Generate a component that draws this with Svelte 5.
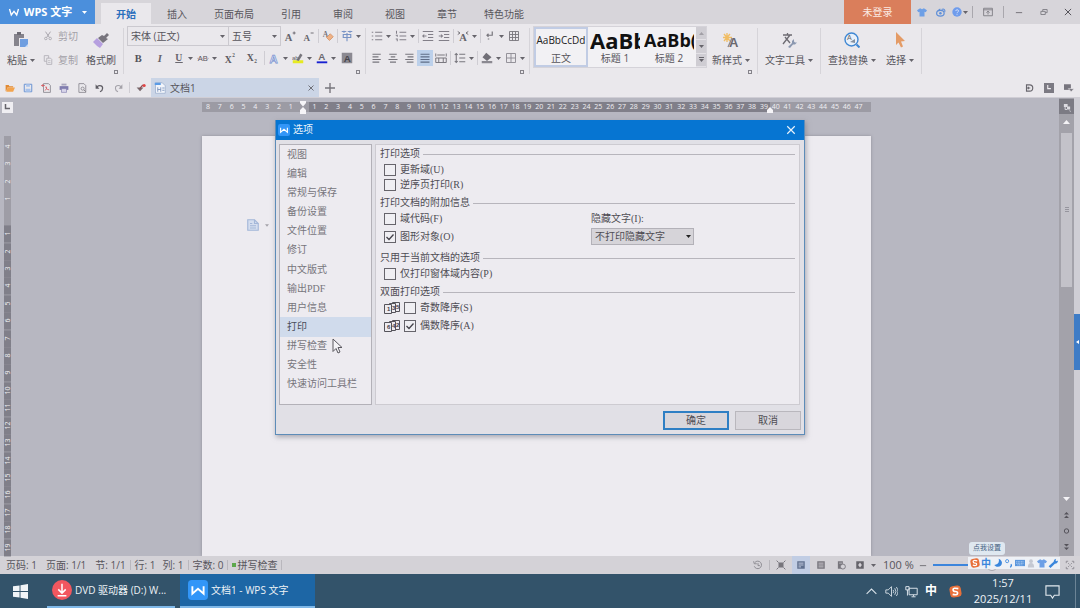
<script>
  const icons = {
    wps: '<path d="M2 4l2.4 8L8 7.2l3.6 4.8L14 4" fill="none" stroke="#fff" stroke-width="1.8"/>',
    paste: '<path d="M1 2h10v4H6v8H1z" fill="#85838c"/><rect x="4" y="0" width="4" height="3" fill="#6d6b74"/><path d="M7 7h8v8H7z" fill="#6f9ee0"/><path d="M12 15l3-3v3z" fill="#c8dcf8"/>',
    cut: '<path d="M4 1l6 9M12 1L6 10" stroke="#a9a7ae" stroke-width="1.6" fill="none"/><circle cx="4.500" cy="12" r="2" fill="none" stroke="#a9a7ae" stroke-width="1.400"/><circle cx="11.500" cy="12" r="2" fill="none" stroke="#a9a7ae" stroke-width="1.400"/>',
    copy: '<path d="M2 1h7v9H2z" fill="none" stroke="#b2b0b7" stroke-width="1.400"/><path d="M6 5h6l2 2v8H6z" fill="#eae8ec" stroke="#b2b0b7" stroke-width="1.400"/><path d="M8 9h4M8 12h4" stroke="#b2b0b7"/>',
    brush: '<path d="M11 4l3-3 2 2-3 3 2 1-5 4-5-5 4-3z" fill="#77747d"/><path d="M4 6l6 6-3 4-3-2-4-4z" fill="#b69fdf"/>',
    aup: '<text x="1" y="14" font-family="Liberation Serif" font-size="14" font-weight="bold" fill="#66646b">A</text><path d="M11.500 4h4M13.500 2v4" stroke="#66646b" stroke-width="1.200"/>',
    adown: '<text x="2" y="14" font-family="Liberation Serif" font-size="12" font-weight="bold" fill="#66646b">A</text><path d="M11.500 4h4" stroke="#66646b" stroke-width="1.200"/>',
    clear: '<text x="1" y="9" font-family="Liberation Serif" font-size="10" font-weight="bold" fill="#74727a">A</text><path d="M11 5l4 4-5 5-4-4z" fill="#efb185" stroke="#cf8f62"/>',
    pinyin: '<path d="M1 2h6M4 1v3M9 2h6M12 1v3" stroke="#7893c4" stroke-width="1.300"/><path d="M3 6h10v4H3zM8 4v11" fill="none" stroke="#7893c4" stroke-width="1.500"/>',
    bold: '<text x="3.500" y="13" font-family="Liberation Serif" font-size="14" font-weight="bold" fill="#55535a">B</text>',
    italic: '<text x="5" y="13" font-family="Liberation Serif" font-size="14" font-style="italic" font-weight="bold" fill="#66646b">I</text>',
    underline: '<text x="3" y="11.500" font-family="Liberation Serif" font-size="13" font-weight="bold" fill="#66646b">U</text><path d="M3 14h10" stroke="#66646b" stroke-width="1.300"/>',
    strike: '<text x="1" y="12" font-family="Liberation Sans" font-size="10" fill="#55535a">AB</text><path d="M0 8.500h16" stroke="#b59aa0" stroke-width=".8"/>',
    sup: '<text x="1" y="14" font-family="Liberation Serif" font-size="13" font-weight="bold" fill="#5c5a61">X</text><text x="11" y="6" font-family="Liberation Serif" font-size="7" font-weight="bold" fill="#5c5a61">2</text>',
    sub: '<text x="1" y="12" font-family="Liberation Serif" font-size="13" font-weight="bold" fill="#5c5a61">X</text><text x="11" y="15" font-family="Liberation Serif" font-size="7" font-weight="bold" fill="#5c5a61">2</text>',
    effect: '<text x="2" y="14" font-family="Liberation Sans" font-size="15" font-weight="bold" fill="#e8ecf8" stroke="#7690cf">A</text>',
    mark: '<path d="M1 11h14v4H1z" fill="#e6ea22"/><path d="M6 11l5-9 3 2-5 8z" fill="#77757c"/><text x="0" y="10" font-family="Liberation Sans" font-size="8" fill="#66646b">ab</text>',
    color: '<text x="3" y="11" font-family="Liberation Sans" font-size="13" font-weight="bold" fill="#6a686f">A</text><path d="M1 12.500h14v2.500H1z" fill="#1720d0"/>',
    shade: '<path d="M1 1h14v14H1z" fill="#8b8991"/><text x="3.500" y="13" font-family="Liberation Sans" font-size="13" font-weight="bold" fill="#46444b">A</text>',
    bullets: '<path d="M1 3h2M1 8h2M1 13h2M5.500 3H15M5.500 8H15M5.500 13H15" stroke="#827f88" stroke-width="1.500"/>',
    numbers: '<path d="M2 1v4M1 7h2v2M1 12h2v3M6 3h9M6 8h9M6 13h9" fill="none" stroke="#827f88" stroke-width="1.400"/>',
    outdent: '<path d="M1 2h14M8 6h7M8 10h7M1 14h14M6 8H1M3 6L1 8l2 2" fill="none" stroke="#827f88" stroke-width="1.400"/>',
    indent: '<path d="M1 2h14M8 6h7M8 10h7M1 14h14M1 8h5M4 6l2 2-2 2" fill="none" stroke="#827f88" stroke-width="1.400"/>',
    scale: '<text x="3" y="14" font-family="Liberation Serif" font-size="14" font-weight="bold" fill="#66646b">A</text><path d="M1 2l3 2-3 2M15 2l-3 2 3 2" fill="none" stroke="#66646b" stroke-width="1.200"/>',
    marks: '<path d="M11 2v5H4M6 5L4 7l2 2M5 12h2" fill="none" stroke="#77757c" stroke-width="1.600"/>',
    grid: '<path d="M2 2h12v12H2zM2 6h12M2 10h12M6 2v12M10 2v12" fill="none" stroke="#77757c" stroke-width="1.200"/>',
    left: '<path d="M2 3h11M2 6.500h8M2 10h11M2 13.500h9" stroke="#77757c" stroke-width="1.400"/>',
    center: '<path d="M3 3h10M5 6.500h6M2 10h12M4 13.500h8" stroke="#77757c" stroke-width="1.400"/>',
    right: '<path d="M3 3h11M6 6.500h8M3 10h11M5 13.500h9" stroke="#77757c" stroke-width="1.400"/>',
    justify: '<path d="M2 3h12M2 6.500h12M2 10h12M2 13.500h12" stroke="#5f6d87" stroke-width="1.600"/>',
    spread: '<path d="M1 2v4M15 2v4M3 4h10M1 8h14v6H1zM5 8v6M11 8v6" fill="none" stroke="#77757c" stroke-width="1.300"/>',
    spacing: '<path d="M3 2v12M1 4l2-2 2 2M1 12l2 2 2-2M7 3h8M7 8h8M7 13h8" fill="none" stroke="#77757c" stroke-width="1.400"/>',
    fill: '<path d="M7 1l7 6-6 5-6-5z" fill="#706e76"/><path d="M1 12h14v3H1z" fill="#8b8991"/>',
    border: '<path d="M2 2h12v12H2zM2 8h12M8 2v12" fill="none" stroke="#8b8991" stroke-width="1.200"/>',
    newstyle: '<path d="M4 1v9M0 5.500h9M1 2l6 7M7 2L1 9" stroke="#f1bd63" stroke-width="1.300"/><path d="M5 15l4-9" stroke="#8b8991" stroke-width="1.300"/><text x="6" y="15" font-family="Liberation Sans" font-size="13" font-weight="bold" fill="#6a686f">A</text>',
    tools: '<path d="M2 3h9M6.500 1v2M9 3L2 12M4 5l5 6" fill="none" stroke="#6d6b72" stroke-width="1.300"/><path d="M7 15l4-4v-2l2-2v2.500l1 1H16l-2 2h-2l-3 3.500z" fill="#8b98b0"/>',
    find: '<circle cx="7.500" cy="7.500" r="6.500" fill="#e8f0fa" stroke="#3f87d3" stroke-width="1.400"/><path d="M12.500 12.500l3 3" stroke="#3f87d3" stroke-width="2"/><text x="3" y="8" font-family="Liberation Sans" font-size="7" fill="#666">A</text><path d="M6 10l5-3v4z" fill="#85909f"/>',
    pointer: '<path d="M4 0l9 9-4 .5 2 5-2 1-2.500-5L4 13z" fill="#e49b66"/>',
    open: '<path d="M1 3h5l1 2h6v2H4l-2 6H1z" fill="#e18a34"/><path d="M4 7h12l-3 7H2z" fill="#f3a44e"/>',
    save: '<path d="M2 2h12v12H2z" fill="none" stroke="#6a93d2" stroke-width="1.600"/><path d="M5 2h6v4H5zM4 9h8v5H4z" fill="#a9c3ec"/>',
    pdf: '<path d="M4 1h8l3 3v11H4z" fill="none" stroke="#8b8991" stroke-width="1.400"/><path d="M6 12c4-2 3-6 2-6s1 5 5 5M1 4h5M3 2L1 4l2 2" fill="none" stroke="#d7575b" stroke-width="1.400"/>',
    print: '<path d="M4 1h8v3H4z" fill="#a9a6bd"/><path d="M1 5h14v6H1z" fill="#7f7cae"/><path d="M4 9h8v6H4z" fill="#d8d5ea" stroke="#7f7cae"/>',
    preview: '<path d="M3 1h8l3 3v11H3z" fill="none" stroke="#85838a" stroke-width="1.300"/><circle cx="9" cy="9" r="2.500" fill="none" stroke="#85838a" stroke-width="1.300"/><path d="M11 11l3 3" stroke="#85838a" stroke-width="1.500"/>',
    undo: '<path d="M3 6c5-4 10-1 9 3 0 2-2 4-4 5" fill="none" stroke="#5f5d64" stroke-width="2"/><path d="M1 2v7h6z" fill="#5f5d64"/>',
    redo: '<path d="M13 6C8 2 3 5 4 9c0 2 2 4 4 5" fill="none" stroke="#a4a2a9" stroke-width="1.800"/><path d="M15 2v7H9z" fill="#a4a2a9"/>',
    check: '<path d="M1 7h11l-5.500 6z" fill="#77686c"/><path d="M6 9l5-6" stroke="#8d4a4e" stroke-width="2"/><circle cx="13" cy="4" r="2.500" fill="#e04545"/>',
    doc: '<path d="M2 1h9l4 4v10H2z" fill="#f2f5fb" stroke="#9aaccb"/><path d="M1 1h8v3H1z" fill="#5b9be5"/><path d="M5 7v6M9 7v6M5 10h4M11 8h3M11 11h3" stroke="#7c94bb" stroke-width="1.200"/>',
    shirt: '<path d="M5 2l3 1.500L11 2l5 3-2 3.500-2-1V15H4V7.500l-2 1L0 5z" fill="#6d9fe6"/>',
    weibo: '<ellipse cx="7" cy="10" rx="6" ry="4.500" fill="none" stroke="#5f8fd8" stroke-width="2"/><circle cx="7" cy="10" r="2" fill="#5f8fd8"/><path d="M9 4c4-2 6 1 5 4M3 6l4-3" fill="none" stroke="#5f8fd8" stroke-width="1.700"/>',
    help: '<circle cx="8" cy="8" r="7.500" fill="#6f9cec"/><path d="M6 6.500c0-3 4.500-3 4.500 0C10.500 8 8 8 8 10M8 11.500v1.500" fill="none" stroke="#dfe8fb" stroke-width="1.300"/>',
    collapse: '<path d="M1 2h14v12H1zM1 4.500h14M8 12V7M5.500 9L8 6.500 10.500 9" fill="none" stroke="#7c7a81" stroke-width="1.400"/>',
    minimize: '<path d="M3 9h10" stroke="#6a686f" stroke-width="1.400"/>',
    restore: '<path d="M3 7h7v5H3zM6 7V4h7v5h-3" fill="none" stroke="#7c7a81" stroke-width="1.400"/>',
    close: '<path d="M3 3l10 10M13 3L3 13" stroke="currentColor" stroke-width="1.600"/>',
    plus: '<path d="M8 0v16M0 8h16" stroke="#77757c" stroke-width="2.200"/>',
    dmark: '<path d="M4 3h5a4 4 0 0 1 0 10H4zM7 6v4M4 8h6" fill="none" stroke="#68666d" stroke-width="1.800"/>',
    lmark: '<path d="M0 0h16v16H0z" fill="#7c7a83"/><path d="M6 3v6h5" fill="none" stroke="#f2f0f4" stroke-width="1.700"/>',
    panel: '<path d="M0 2h11v9H0z" fill="#77757e"/><path d="M7 9h9l-4.500 5z" fill="#77757e" stroke="#eae8ec"/>',
    history: '<path d="M3 4a6 6 0 1 1-1 6M1 2l1 4h4M8 5v4h3" fill="none" stroke="#85838a" stroke-width="1.400"/>',
    full: '<path d="M4 4h8v8H4z" fill="#77757c"/><path d="M1 1l3 3M15 1l-3 3M1 15l3-3M15 15l-3-3" stroke="#77757c" stroke-width="1.600"/>',
    pageview: '<path d="M2 2h12v12H2z" fill="#5f6f8e"/><path d="M4 5h8M4 8h8M4 11h4" stroke="#dbe3f4" stroke-width="1.200"/>',
    outline: '<path d="M2 2h12v12H2z" fill="#77757c"/><path d="M4 5h8M4 8h8M4 11h8" stroke="#d4d2d7" stroke-width="1.300"/>',
    web: '<path d="M3 2h8v12H3z" fill="#77757c"/><circle cx="11" cy="10.500" r="4" fill="#d4d2d7" stroke="#77757c" stroke-width="1.400"/><path d="M5 5h5" stroke="#d4d2d7"/>',
    read: '<path d="M2 2h12v12H2z" fill="#66646b"/><path d="M8 4l3 4-3 4-3-4z" fill="#d4d2d7"/>',
    corner: '<path d="M2 5V2h3M11 2h3v3M14 11v3h-3M5 14H2v-3M5 5l2 2M11 5L9 7M5 11l2-2M11 11L9 9" fill="none" stroke="#85838a" stroke-width="1.300"/>',
    windows: '<path d="M0 2.500l7-1v6H0zM8 1.300L16 0v7.500H8zM0 8.500h7v6l-7-1zM8 8.500h8V16l-8-1.300z" fill="#f1f4f7"/>',
    download: '<circle cx="8" cy="8" r="8" fill="#f2575f"/><path d="M8 3v7M5 7.500l3 3 3-3M4.500 12.500h7" fill="none" stroke="#fff" stroke-width="1.200"/>',
    wpsapp: '<rect width="16" height="16" rx="3" fill="#3296f8"/><path d="M3.500 5v6L8 7l4.500 4V5" fill="none" stroke="#fff" stroke-width="1.500"/>',
    chevron: '<path d="M2 11l6-6 6 6" fill="none" stroke="#dbe3ea" stroke-width="1.300"/>',
    sound: '<path d="M1 6h3l4-4v12l-4-4H1zM10 6q1.500 2 0 4M12 4q3 4 0 8M14 2.500q4 5.500 0 11" fill="none" stroke="#dbe3ea" stroke-width="1.100"/>',
    network: '<path d="M5 4h10v8H5zM8 14.500h5M10.500 12v2M1 2h4v4H1zM3 6v7" fill="none" stroke="#dbe3ea" stroke-width="1.200"/>',
    sogou: '<rect x="1" y="1" width="14" height="14" rx="4" fill="#e8703a" transform="rotate(-10 8 8)"/><path d="M11.500 4.500Q5 3 5 5.500T8 8t2.500 2.500-6 1" fill="none" stroke="#fff" stroke-width="2"/>',
    notice: '<path d="M1 2h14v10H10l-2 3-2-3H1z" fill="none" stroke="#e4eaef" stroke-width="1.200"/>',
    moon: '<path d="M9 1c2 7-2 9-7 10 5 6 14 2 12-5-1-3-3-4-5-5z" fill="#3a86dc"/>',
    punct: '<circle cx="5" cy="5" r="2.500" fill="none" stroke="#3a86dc" stroke-width="1.300"/><path d="M11 10q2 2-1 5" fill="none" stroke="#3a86dc" stroke-width="2"/>',
    keyboard: '<path d="M0 3h16v10H0z" fill="#5b97dd"/><path d="M2 6h12M2 8.500h12M4 11h8" stroke="#e3eefb" stroke-dasharray="1.500 1"/>',
    person: '<circle cx="8" cy="5" r="3" fill="#c4c8d2"/><path d="M3 15q0-7 5-7t5 7z" fill="#c4c8d2"/>',
    wrench: '<path d="M1 13L9 6q0-4 4-5L12 4l2 1 2-1q0 5-5 5l-7 7z" fill="#3a86dc"/>',
    note: '<path d="M1 1h9l5 5v9H1z" fill="#d5deef" stroke="#a4b7d8" stroke-width="1.500"/><path d="M10 1v5h5M4 6h3M4 9h8M4 12h8" fill="none" stroke="#a4b7d8" stroke-width="1.500"/>',
    select: '<path d="M3 3h6v5H3zM8 7h5v5H8z" fill="#dcdbe1"/><path d="M5 5v7h3M12 14l2 1" fill="none" stroke="#dcdbe1" stroke-width="1.500"/>'
  };

  const menus = ['开始', '插入', '页面布局', '引用', '审阅', '视图', '章节', '特色功能'];
  const quick = [
    ['open', '打开'], ['save', '保存'], ['pdf', '输出PDF'], ['print', '打印'],
    ['preview', '打印预览'], ['undo', '撤销'], ['redo', '恢复']
  ];
  // Each tool: [icon, label, has drop-down, extra class]; null draws a divider.
  const fontTop = [['aup', '增大字号', 0, 'mid'], ['adown', '减小字号', 0, 'mid'], null, ['clear', '清除格式'], null, ['pinyin', '拼音指南', 1]];
  const fontBottom = [
    ['bold', '加粗', 0, 'wide'], ['italic', '倾斜', 0, 'wide'], ['underline', '下划线', 1], ['strike', '删除线', 1],
    ['sup', '上标', 0, 'wide'], ['sub', '下标', 0, 'wide'], null, ['effect', '文字效果', 1], ['mark', '突出显示', 1],
    ['color', '字体颜色', 1], ['shade', '字符底纹', 0, 'mid']
  ];
  const paraTop = [
    ['bullets', '项目符号', 1], ['numbers', '编号', 1], null, ['outdent', '减少缩进'], ['indent', '增加缩进'], null,
    ['scale', '中文版式', 1], null, ['marks', '显示标记', 1], ['grid', '表格']
  ];
  const paraBottom = [
    ['left', '左对齐'], ['center', '居中'], ['right', '右对齐'], ['justify', '两端对齐', 0, 'on'], ['spread', '分散对齐'],
    null, ['spacing', '行距', 1], null, ['fill', '底纹颜色', 1], ['border', '边框', 1]
  ];

  const hRuler = Array.from({ length: 56 }, (_, i) => Math.abs(i - 8) || '');
  const vRuler = Array.from({ length: 24 }, (_, i) => Math.abs(i - 4) || '');

  const pages = ['视图', '编辑', '常规与保存', '备份设置', '文件位置', '修订', '中文版式', '输出PDF', '用户信息', '打印', '拼写检查', '安全性', '快速访问工具栏'];
  let page = $state('打印');
  let opts = $state({ update: false, reverse: false, codes: false, shapes: true, form: false, odd: false, even: true });
  let zoom = $state(50);
</script>

{#snippet icon(name, cls = '')}
  <svg class="icon {cls}" viewBox="0 0 16 16" aria-hidden="true">{@html icons[name]}</svg>
{/snippet}

{#snippet caret()}
  <svg class="caret" viewBox="0 0 5 3" aria-hidden="true"><path d="M0 0h5L2.500 3z" fill="currentColor" /></svg>
{/snippet}

{#snippet tools(list)}
  {#each list as t}
    {#if t}
      <button class="tool {t[3] ?? ''}" class:split={t[2]} aria-label={t[1]}>
        <span class="pic">{@render icon(t[0], 'sm')}</span>{#if t[2]}{@render caret()}{/if}
      </button>
    {:else}
      <i class="rule"></i>
    {/if}
  {/each}
{/snippet}

{#snippet box(key, label)}
  <label class="opt"><input type="checkbox" bind:checked={opts[key]} /><span>{label}</span></label>
{/snippet}

{#snippet sheets(digits)}
  <svg class="sheets" viewBox="0 0 17 12" aria-hidden="true">
    <g fill="#edebf0" stroke="#55535a"><path d="M8.500 .5h7v9h-7z" /><path d="M5.500 1.500h6v9h-6z" /><path d="M.5 2.500h7v9h-7z" /></g>
    <g font-family="Liberation Sans" font-size="6" font-weight="bold" fill="#44424a">
      <text x="3" y="9">{digits[0]}</text><text x="8" y="8">{digits[1]}</text><text x="12" y="7">{digits[2]}</text>
    </g>
  </svg>
{/snippet}

<div class="app">
  <header class="title">
    <button class="brand">{@render icon('wps', 'sm')}<b>WPS 文字</b>{@render caret()}</button>
    <nav>
      {#each menus as m, i}<button class="menu" class:active={i === 0}>{m}</button>{/each}
    </nav>
    <button class="login">未登录</button>
    <div class="wintools">
      <button aria-label="皮肤">{@render icon('shirt', 'xs')}</button>
      <button aria-label="微博">{@render icon('weibo', 'xs')}</button>
      <button aria-label="帮助">{@render icon('help', 'xs')}{@render caret()}</button>
      <i class="rule"></i>
      <button class="roomy" aria-label="隐藏功能区">{@render icon('collapse', 'xs')}</button>
      <i class="rule"></i>
      <button class="roomy" aria-label="最小化">{@render icon('minimize', 'xs')}</button>
      <button class="roomy" aria-label="还原">{@render icon('restore', 'xs')}</button>
      <button class="roomy" aria-label="关闭">{@render icon('close', 'xs')}</button>
    </div>
  </header>

  <section class="ribbon">
    <div class="group clip">
      <button class="big">{@render icon('paste')}<span>粘贴{@render caret()}</span></button>
      <div class="stack">
        <button class="dim">{@render icon('cut', 'xs')}剪切</button>
        <button class="dim">{@render icon('copy', 'xs')}复制</button>
      </div>
      <button class="big">{@render icon('brush')}<span>格式刷</span></button>
      <button class="launch" aria-label="剪贴板设置"></button>
    </div>
    <div class="group rows">
      <div class="row">
        <button class="combo font"><span>宋体 (正文)</span>{@render caret()}</button>
        <button class="combo size"><span>五号</span>{@render caret()}</button>
        {@render tools(fontTop)}
      </div>
      <div class="row">{@render tools(fontBottom)}</div>
      <button class="launch" aria-label="字体设置"></button>
    </div>
    <div class="group rows">
      <div class="row">{@render tools(paraTop)}</div>
      <div class="row">{@render tools(paraBottom)}</div>
      <button class="launch" aria-label="段落设置"></button>
    </div>
    <div class="group styles">
      <div class="gallery">
        <button class="style chosen"><span class="sample">AaBbCcDd</span><span>正文</span></button>
        <button class="style"><span class="sample h1">AaBb</span><span>标题 1</span></button>
        <button class="style"><span class="sample h2">AaBb(</span><span>标题 2</span></button>
        <div class="steps">
          <button aria-label="上一行" class="off">{@render caret()}</button>
          <button aria-label="下一行">{@render caret()}</button>
          <button aria-label="更多样式" class="more">{@render caret()}</button>
        </div>
      </div>
      <button class="big">{@render icon('newstyle')}<span>新样式{@render caret()}</span></button>
      <button class="launch" aria-label="样式设置"></button>
    </div>
    <div class="group wordtools"><button class="big">{@render icon('tools')}<span>文字工具{@render caret()}</span></button></div>
    <div class="group last">
      <button class="big">{@render icon('find')}<span>查找替换{@render caret()}</span></button>
      <button class="big">{@render icon('pointer')}<span>选择{@render caret()}</span></button>
    </div>
  </section>

  <section class="tabs">
    {#each quick as q}<button class="quick" aria-label={q[1]}>{@render icon(q[0], 'xs')}</button>{/each}
    <i class="rule"></i>
    <button class="quick" aria-label="更多">{@render icon('check', 'xs')}</button>
    <div class="doc">{@render icon('doc', 'sm')}<span>文档1</span><button aria-label="关闭文档">{@render icon('close', 'xx')}</button></div>
    <button class="quick add" aria-label="新建">{@render icon('plus', 'xs')}</button>
    <div class="end">
      <button aria-label="文档切换">{@render icon('dmark', 'xs')}</button>
      <button aria-label="标尺">{@render icon('lmark', 'xs')}</button>
      <button aria-label="任务窗格">{@render icon('panel', 'xs')}</button>
    </div>
  </section>

  <main>
    <aside class="vside">
      <span class="tabstop"><svg viewBox="0 0 11 11"><path d="M3.500 2v4.500H8" fill="none" stroke="#66646b" stroke-width="1.500" /></svg></span>
      <div class="vruler">
        {#each vRuler as n, i}<span class:dark={i > 4}>{n}</span>{/each}
      </div>
    </aside>
    <div class="canvas">
      <div class="hruler">
        {#each hRuler as n, i}
          <span class:dark={i > 8 && i < 48}>{n}{#if i === 8}<svg class="mark" viewBox="0 0 6 13"><path d="M0 0h6v2L3 5.500 0 2zM0 9l3-3 3 3v4H0z" fill="#f6f5f8" /></svg>{/if}{#if i === 47}<svg class="mark" viewBox="0 0 6 13"><path d="M0 9l3-3 3 3v3H0z" fill="#f6f5f8" /></svg>{/if}</span>
        {/each}
      </div>
      <article class="paper"><button class="pasteopt" aria-label="粘贴选项">{@render icon('note', 'sm')}{@render caret()}</button></article>
    </div>
    <div class="scroll">
      <button class="pick" aria-label="选择对象">{@render icon('select', 'xs')}</button>
      <button class="arrow" aria-label="向上滚动"><svg viewBox="0 0 7 4"><path d="M0 4l3.500-4L7 4z" fill="#f4f3f6" /></svg></button>
      <div class="track"><div class="thumb"><i></i><i></i><i></i></div></div>
      <button class="arrow" aria-label="向下滚动"><svg viewBox="0 0 7 4"><path d="M0 0h7L3.500 4z" fill="#f4f3f6" /></svg></button>
      <button class="arrow" aria-label="上一页"><svg viewBox="0 0 5 6"><path d="M0 2.500L2.500 0 5 2.500zM0 6l2.500-2.500L5 6z" fill="#55535a" /></svg></button>
      <button class="arrow" aria-label="浏览对象"><svg viewBox="0 0 6 6"><circle cx="3" cy="3" r="2.200" fill="none" stroke="#55535a" /></svg></button>
      <button class="arrow" aria-label="下一页"><svg viewBox="0 0 5 6"><path d="M0 0h5L2.500 2.500zM0 3.500h5L2.500 6z" fill="#55535a" /></svg></button>
    </div>
    <div class="edge"><button aria-label="展开任务窗格"><svg viewBox="0 0 3 4"><path d="M3 0v4L0 2z" fill="#fff" /></svg></button></div>
  </main>

  <footer class="status">
    <span class="s1">页码: 1</span><span class="s1">页面: 1/1</span><span>节: 1/1</span><i class="rule"></i>
    <span class="s2">行: 1</span><span>列: 1</span><i class="rule"></i>
    <span>字数: 0</span><i class="rule"></i>
    <span class="spell"><i></i>拼写检查</span><i class="rule"></i>
    <div class="views">
      <button aria-label="历史版本">{@render icon('history', 'xs')}</button><i class="rule"></i>
      <button aria-label="全屏显示">{@render icon('full', 'xs')}</button>
      <button class="on" aria-label="页面视图">{@render icon('pageview', 'xs')}</button>
      <button aria-label="大纲视图">{@render icon('outline', 'xs')}</button>
      <button aria-label="Web 版式">{@render icon('web', 'xs')}</button>
      <button class="readview" aria-label="阅读版式">{@render icon('read', 'xs')}{@render caret()}</button>
      <span class="pct">100 %</span>
      <button class="minus" aria-label="缩小">{@render icon('minimize', 'xs')}</button>
      <input type="range" min="0" max="100" bind:value={zoom} aria-label="显示比例" />
      <button class="fit" aria-label="调整窗口">{@render icon('corner', 'xs')}</button>
    </div>
  </footer>

  <footer class="taskbar">
    <button class="start" aria-label="开始菜单">{@render icon('windows')}</button>
    <button class="task dvd">{@render icon('download', 'lg')}<span>DVD 驱动器 (D:) W...</span></button>
    <button class="task current">{@render icon('wpsapp', 'lg')}<span>文档1 - WPS 文字</span></button>
    <div class="tray">
      <button aria-label="显示隐藏的图标">{@render icon('chevron', 'sm')}</button>
      <button aria-label="音量">{@render icon('sound')}</button>
      <button aria-label="网络">{@render icon('network')}</button>
      <button class="ime">中</button>
      <button class="so" aria-label="搜狗输入法">{@render icon('sogou', 'sm')}</button>
      <time><span>1:57</span><span>2025/12/11</span></time>
      <button class="bell" aria-label="通知">{@render icon('notice')}</button>
      <i class="rule"></i>
    </div>
  </footer>

  <div class="dialog" role="dialog" aria-label="选项">
    <div class="dtitle">{@render icon('wpsapp', 'sm')}<span>选项</span><button aria-label="关闭">{@render icon('close', 'sm')}</button></div>
    <div class="dbody">
      <ul>
        {#each pages as p}<li><button class:sel={page === p} onclick={() => (page = p)}>{p}</button></li>{/each}
      </ul>
      <div class="pane">
        <section><h3>打印选项</h3>{@render box('update', '更新域(U)')}{@render box('reverse', '逆序页打印(R)')}</section>
        <section>
          <h3>打印文档的附加信息</h3>
          <div class="two">
            <div class="loose">{@render box('codes', '域代码(F)')}{@render box('shapes', '图形对象(O)')}</div>
            <div class="hidden-text">
              <label for="hid">隐藏文字(I):</label>
              <div class="drop"><select id="hid"><option>不打印隐藏文字</option><option>打印隐藏文字</option></select>{@render caret()}</div>
            </div>
          </div>
        </section>
        <section><h3>只用于当前文档的选项</h3>{@render box('form', '仅打印窗体域内容(P)')}</section>
        <section>
          <h3>双面打印选项</h3>
          <div class="loose">
            <div class="duplex">{@render sheets('135')}{@render box('odd', '奇数降序(S)')}</div>
            <div class="duplex">{@render sheets('642')}{@render box('even', '偶数降序(A)')}</div>
          </div>
        </section>
      </div>
    </div>
    <div class="dfoot"><button class="ok">确定</button><button>取消</button></div>
    <svg class="cursor" viewBox="0 0 11 16"><path d="M1 1v12.500l3-3 2 4.500 2-1-2-4.500h4z" fill="#f4f3f6" stroke="#5a585f" /></svg>
  </div>

  <div class="tip">点我设置</div>
  <div class="imebar">
    {@render icon('sogou', 'xs')}<b>中</b>{@render icon('moon', 'xs')}{@render icon('punct', 'xs')}{@render icon('keyboard', 'xs')}{@render icon('person', 'xs')}{@render icon('shirt', 'xs')}{@render icon('wrench', 'xs')}
  </div>
</div>

<style>
  :global(body) { margin: 0; }
  .app {
    position: relative; display: flex; flex-direction: column; height: 100vh; overflow: hidden;
    font: 10px/14px "Open Sans", "Noto Sans CJK SC", sans-serif; color: #57555c; background: #eae8ec;
  }
  .app * { box-sizing: border-box; }
  button { border: 0; padding: 0; margin: 0; background: none; font: inherit; color: inherit; display: flex; align-items: center; justify-content: center; white-space: nowrap; }
  .icon { width: 16px; height: 16px; flex: none; display: block; }
  .icon.sm { width: 12px; height: 12px; }
  .icon.xs { width: 10px; height: 10px; }
  .icon.xx { width: 8px; height: 8px; }
  .icon.lg { width: 20px; height: 20px; }
  .caret { width: 5px; height: 3px; flex: none; display: inline-block; color: #66646b; }
  .rule { width: 1px; flex: none; background: #cfcdd3; align-self: stretch; margin: 3px 1px; }

  .title { display: flex; height: 24px; flex: none; background: #d7d5da; }
  .brand { width: 95px; background: #4b8fdc; color: #fff; gap: 4px; font-size: 11px; }
  .brand .caret { color: #fff; margin-left: 6px; }
  nav { display: flex; flex: 1; padding: 3px 0 0 6px; }
  .menu { min-width: 52px; padding: 0 11px; }
  .menu.active { background: #eae8ec; color: #2a6fbd; font-weight: bold; min-width: 50px; }
  .login { width: 67px; background: #da7e5b; color: #fbeae3; }
  .wintools { display: flex; align-items: center; width: 169px; padding-left: 1px; }
  .wintools button { width: 19px; height: 24px; gap: 1px; }
  .wintools .rule { background: #a9a7ad; margin: 6px 3px; }
  .wintools .roomy { flex: 1; }

  .ribbon { display: flex; height: 52px; flex: none; }
  .group { position: relative; display: flex; padding: 0 6px; }
  .group::after { content: ""; position: absolute; right: 0; top: 4px; bottom: 2px; width: 1px; background: #d6d4d9; }
  .group.clip { padding: 0 8px 0 7px; gap: 8px; }
  .big { flex-direction: column; justify-content: flex-start; padding-top: 8px; gap: 5px; }
  .big span { display: flex; align-items: center; gap: 3px; }
  .stack { display: flex; flex-direction: column; padding-top: 5px; gap: 10px; }
  .dim { color: #a3a1a8; gap: 5px; }
  .launch { position: absolute; right: 6px; bottom: 2px; width: 4px; height: 4px; border: 1px solid #85838a; }
  .group.rows { flex-direction: column; padding: 2px 3px 0; gap: 2px; }
  .row { display: flex; align-items: center; height: 20px; }
  .combo { height: 20px; border: 1px solid #cbc9cf; justify-content: space-between; padding: 0 3px; }
  .combo.font { width: 102px; }
  .combo.size { width: 52px; border-left: 0; }
  .tool { width: 16px; height: 16px; }
  .tool.mid { width: 18px; }
  .tool.wide { width: 22px; }
  .tool.split { width: 24px; }
  .pic { width: 16px; display: flex; justify-content: center; }
  .tool.split .caret { margin: 0 2px 0 1px; }
  .tool.on { background: #bcd0ea; }
  .group.styles { padding: 2px 8px 0 3px; }
  .gallery { display: flex; height: 42px; background: #f2f1f4; border: 1px solid #d5d3d9; margin-right: 5px; }
  .styles .big { padding-top: 6px; }
  .style { width: 54px; flex-direction: column; overflow: hidden; }
  .style.chosen { border: 2px solid #c1cce4; }
  .sample { height: 22px; line-height: 22px; color: #222; display: block; }
  .sample.h1, .sample.h2 { font-weight: bold; color: #111; width: 50px; overflow: hidden; text-align: left; }
  .sample.h1 { font-size: 22px; }
  .sample.h2 { font-size: 18px; }
  .steps { width: 10px; display: flex; flex-direction: column; background: #cfcdd3; }
  .steps button { flex: 1; border-bottom: 1px solid #e3e1e6; }
  .steps .off .caret { transform: rotate(180deg); color: #a19fa6; }
  .steps .more .caret { border-top: 1px solid #66646b; height: 5px; padding-top: 1px; }
  .group.wordtools { padding: 0 8px 0 7px; }
  .group.last { gap: 10px; padding: 0 8px 0 7px; }

  .tabs { display: flex; align-items: center; height: 22px; flex: none; padding: 2px 6px 0 1px; border-bottom: 1px solid #d0ced5; }
  .quick { width: 18px; height: 20px; }
  .tabs .rule { margin: 4px 2px; }
  .doc { display: flex; align-items: center; gap: 4px; width: 168px; height: 19px; padding: 0 4px 0 3px; margin-left: 1px; background: #cbd5e6; }
  .doc span { flex: 1; }
  .quick.add { width: 22px; }
  .end { display: flex; gap: 10px; margin-left: auto; }

  main { display: flex; flex: 1; min-height: 0; background: #b7b7c1; }
  .vside { width: 14px; display: flex; flex-direction: column; padding-top: 4px; }
  .tabstop { margin-left: 2px; width: 11px; height: 11px; background: #efeef2; margin-bottom: 23px; flex: none; }
  .tabstop svg { display: block; }
  .vruler { flex: 1; min-height: 0; width: 7px; margin-left: 4px; padding-top: 2px; background: #9e9da6; display: flex; flex-direction: column; font-size: 7px; line-height: 7px; color: #f0eff3; }
  .vruler span { flex: 1; min-height: 0; writing-mode: vertical-rl; transform: rotate(180deg); display: flex; align-items: center; justify-content: center; }
  .vruler span::before { content: ""; width: 1px; }
  .vruler .dark { background: #807f89; }
  .canvas { flex: 1; display: flex; flex-direction: column; align-items: center; padding-top: 4px; }
  .hruler { width: 64%; height: 10px; flex: none; display: flex; background: #9c9ba4; padding-right: 6px; font-size: 7px; line-height: 10px; color: #f0eff3; margin-bottom: 24px; }
  .hruler span { position: relative; flex: 1; width: 0; display: flex; justify-content: center; }
  .hruler .dark { background: #807f89; }
  .mark { position: absolute; top: -1px; width: 6px; height: 13px; z-index: 1; }
  .hruler .dark .mark { right: -3px; }
  .paper { width: 64%; flex: 1; background: #edebf0; box-shadow: 0 0 3px #8f8e99; }
  .pasteopt { gap: 6px; padding: 83px 0 0 45px; }
  .pasteopt .caret { color: #a5a3aa; width: 4px; }
  .scroll { width: 15px; display: flex; flex-direction: column; align-items: center; background: #a3a2aa; padding: 1px 0; }
  .pick { width: 15px; height: 15px; background: #7c7b84; }
  .arrow { height: 16px; width: 15px; }
  .arrow svg { width: 7px; height: 6px; }
  .track { flex: 1; width: 11px; padding-top: 3px; }
  .thumb { height: 43%; background: #c3c2c9; display: flex; flex-direction: column; align-items: center; justify-content: center; gap: 1px; }
  .thumb i { width: 4px; height: 1px; background: #96959e; }
  .edge { width: 6px; background: #cfced5; padding-top: 216px; }
  .edge button { width: 6px; height: 56px; background: #3e7cc6; }
  .edge svg { width: 3px; height: 4px; }

  .status { display: flex; align-items: center; height: 18px; flex: none; padding-left: 6px; background: #d4d2d7; }
  .status > span { white-space: nowrap; }
  .s1 { margin-right: 9px; }
  .s2 { margin-right: 7px; }
  .status .rule { background: #b9b7bd; margin: 4px 4px; }
  .spell { display: flex; align-items: center; gap: 1px; }
  .spell i { width: 4px; height: 4px; background: #5da84c; }
  .views { display: flex; align-items: center; height: 18px; margin-left: auto; width: 332px; }
  .views button { width: 20px; height: 18px; }
  .views .on { background: #c1cde4; width: 18px; margin: 0 1px; }
  .views .readview { width: 28px; gap: 6px; }
  .pct { width: 30px; white-space: nowrap; font-size: 11px; margin-left: 4px; }
  .views .rule { margin: 4px 1px; }
  .views input { flex: 1; min-width: 0; height: 12px; margin: 0 10px 0 0; appearance: none; background: linear-gradient(#3c85dc, #3c85dc) center / 100% 2px no-repeat; }
  .views input::-webkit-slider-thumb { appearance: none; width: 12px; height: 12px; border-radius: 50%; background: #edebf0; border: 1px solid #a9a7ad; }

  .taskbar { display: flex; height: 34px; flex: none; background: #33536a; color: #edf2f6; }
  .start { width: 40px; }
  .start .icon { width: 15px; height: 15px; }
  .task { justify-content: flex-start; gap: 3px; border-bottom: 2px solid #7fb8e8; }
  .task.dvd { width: 128px; margin: 0 5px 0 7px; padding-left: 5px; }
  .task.current { width: 135px; background: #1d66a5; padding-left: 8px; gap: 3px; }
  .tray { display: flex; align-items: center; margin-left: auto; }
  .tray button { width: 20px; height: 34px; }
  .tray .icon { width: 13px; height: 13px; }
  .tray .ime { font-size: 12px; font-weight: bold; color: #fff; }
  .tray .so { width: 28px; }
  time { display: flex; flex-direction: column; align-items: center; font-size: 11px; line-height: 16px; width: 68px; }
  .tray .bell { width: 30px; }
  .tray .bell .icon { width: 15px; height: 15px; }
  .tray .rule { margin: 0 4px 0 8px; background: #6c8496; }

  .dialog {
    position: absolute; left: 50%; top: 120px; width: 530px; margin-left: -265px; display: flex; flex-direction: column;
    background: #e1e0e6; border: 1px solid #5d8cb8; border-top: 0; box-shadow: 1px 2px 5px #77768299;
    font-family: "Liberation Serif", "Noto Sans CJK SC", serif; color: #4f4d54;
  }
  .dtitle { display: flex; align-items: center; gap: 3px; height: 20px; padding: 0 7px 0 2px; background: #0675d2; color: #e8f2fb; }
  .dtitle span { flex: 1; }
  .dbody { display: flex; gap: 3px; padding: 4px 4px 0 3px; }
  ul { list-style: none; margin: 0; padding: 0 0 10px; width: 93px; border: 1px solid #b3b1b8; background: #edebf0; display: flex; flex-direction: column; }
  li { flex: 1; display: flex; }
  li button { flex: 1; justify-content: flex-start; padding-left: 7px; color: #77757c; }
  li .sel { background: #d0dbec; color: #4a4e5a; }
  .pane { flex: 1; height: 261px; border: 1px solid #cdcbd1; background: #edebf0; padding: 1px 4px 0; display: flex; flex-direction: column; gap: 3px; }
  h3 { margin: 0; font: inherit; height: 16px; display: flex; align-items: center; gap: 3px; }
  h3::after { content: ""; flex: 1; height: 1px; background: #b7b5bc; }
  .opt { display: flex; align-items: center; gap: 4px; height: 15px; padding-left: 4px; }
  .opt input { appearance: none; width: 12px; height: 12px; margin: 0; border: 1px solid #66646b; background: #f0eff3 center / 10px 10px no-repeat; }
  .opt input:checked { background-image: url("data:image/svg+xml,%3Csvg xmlns='http://www.w3.org/2000/svg' viewBox='0 0 10 10'%3E%3Cpath d='M1.500 5l2.500 2.500L8.500 2.500' fill='none' stroke='%2344424a' stroke-width='1.300'/%3E%3C/svg%3E"); }
  .two { display: grid; grid-template-columns: 211px 1fr; padding-bottom: 2px; }
  .loose { display: flex; flex-direction: column; gap: 3px; }
  .hidden-text label { display: block; height: 17px; line-height: 15px; }
  .drop { display: flex; align-items: center; width: 103px; }
  .drop select { appearance: none; width: 103px; flex: none; height: 17px; padding: 0 3px; border: 1px solid #b3b1b8; border-radius: 0; background: #d6d4d9; font: inherit; color: inherit; }
  .drop .caret { margin-left: -8px; color: #222; pointer-events: none; }
  .duplex { display: flex; align-items: center; padding-left: 4px; }
  .duplex .opt { padding-left: 3px; }
  .sheets { width: 17px; height: 12px; }
  .dfoot { display: flex; justify-content: flex-end; gap: 6px; padding: 6px 3px 4px; }
  .dfoot button { width: 66px; height: 19px; background: #d8d6dc; border: 1px solid #b9b7bd; }
  .dfoot .ok { border: 2px solid #2f7fc4; }
  .cursor { position: absolute; left: 56px; top: 218px; width: 11px; height: 16px; }

  .tip { position: absolute; right: 75px; bottom: 53px; padding: 0 4px; height: 13px; line-height: 12px; font-size: 7px; border-radius: 3px; background: #dfe8f0; color: #44617f; }
  .imebar { position: absolute; right: 20px; bottom: 39px; height: 12px; display: flex; align-items: center; gap: 1px; padding: 0 2px; background: #eef1f6; color: #3a86dc; }
  .imebar b { width: 11px; line-height: 12px; }
</style>
